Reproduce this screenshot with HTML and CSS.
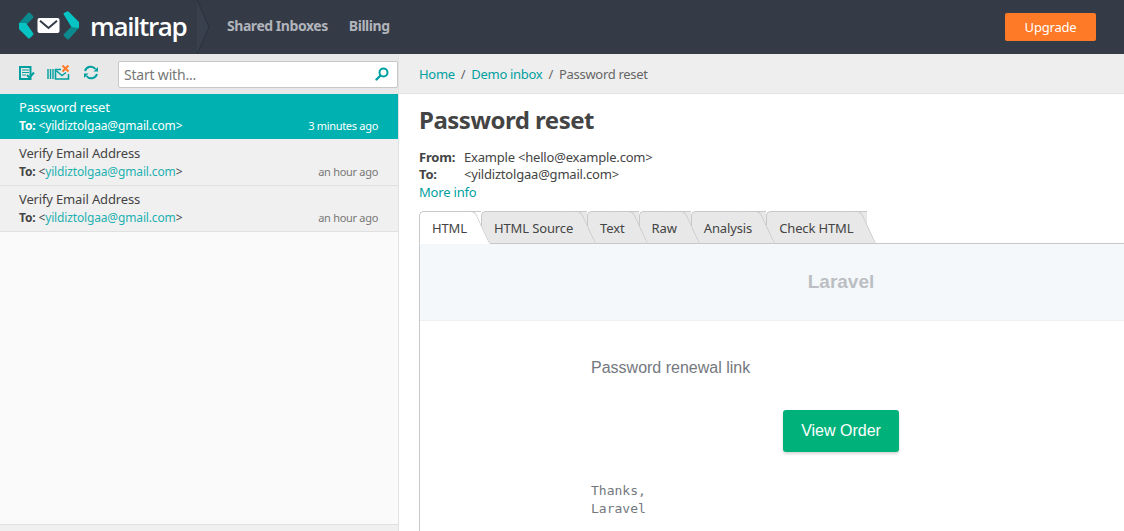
FILE: index.html
```html
<!DOCTYPE html>
<html lang="en">
<head>
  <meta charset="UTF-8" />
  <title>Mailtrap - Password reset</title>
  <link rel="stylesheet" href="styles.css">
</head>
<body>

  <header class="topbar">
    <a class="logo" href="#">
      <svg class="logo-mark" width="62" height="32" viewBox="0 0 62 32">
        <path d="M1 12 L10 2 Q11 1 12 2 L15 5 Q16 6 15 7 L9 13 Z" fill="#0a8a8e"/>
        <path d="M1 12 H8 L15 22 Q16 23 15 24 L12 27 Q11 28 10 27 L1 18 Z" fill="#06c4c4"/>
        <path d="M46 4 Q45 3 46 2 L49 0.500 Q50 0 51 1 L61 11 V17 H54 Z" fill="#06c4c4"/>
        <path d="M61 17 L51 28 Q50 29 49 28 L46 25 Q45 24 46 23 L53 16 Z" fill="#0a8a8e"/>
        <rect x="19.500" y="7" width="22" height="15" rx="2" fill="#fff"/>
        <path d="M22 9.700 L30.500 17 L39 9.700" stroke="#343b47" stroke-width="2" fill="none"/>
      </svg>
      <span class="logo-text">mailtrap</span>
    </a>
    <svg class="logo-edge" width="14" height="54" viewBox="0 0 14 54">
      <path d="M0 0 L12 27 L0 54 Z" fill="#3a414e"/>
      <path d="M0 0 L12 27 L0 54" fill="none" stroke="#2b313b" stroke-width="1"/>
    </svg>
    <nav class="topnav">
      <a href="#">Shared Inboxes</a>
      <a href="#">Billing</a>
    </nav>
    <button class="upgrade" type="button">Upgrade</button>
  </header>

  <div class="main">
    <aside class="sidebar">
      <div class="toolbar">
        <svg class="tool" width="16" height="16" viewBox="0 0 16 16">
          <rect x="1" y="2" width="10.500" height="12" fill="none" stroke="#00a0a0" stroke-width="2"/>
          <path d="M3 5 H10 M3 7.500 H10 M3 10 H7" stroke="#00a0a0" stroke-width="1.200"/>
          <path d="M8 10 L10.500 12.500 L15 7.500" stroke="#00a0a0" stroke-width="2" fill="none"/>
        </svg>
        <svg class="tool" width="23" height="16" viewBox="0 0 23 16">
          <path d="M1 4 V14 M3.500 4 V14 M6 4 V14" stroke="#00a0a0" stroke-width="1.400"/>
          <path d="M14 4.500 H8.500 V14 H21.500 V9" stroke="#00a0a0" stroke-width="1.600" fill="none"/>
          <path d="M9 5.500 L15 10.500 L19 7.500" stroke="#00a0a0" stroke-width="1.400" fill="none"/>
          <path d="M15.500 0.500 L21.500 6.500 M21.500 0.500 L15.500 6.500" stroke="#ff7a27" stroke-width="2"/>
        </svg>
        <svg class="tool" width="16" height="16" viewBox="0 0 16 16">
          <path d="M2 6 A6 6 0 0 1 12.500 4" stroke="#00a0a0" stroke-width="2" fill="none"/>
          <path d="M15 2 V6.500 H10.500 Z" fill="#00a0a0"/>
          <path d="M14 9 A6 6 0 0 1 3.500 11" stroke="#00a0a0" stroke-width="2" fill="none"/>
          <path d="M1 13 V8.500 H5.500 Z" fill="#00a0a0"/>
        </svg>
        <label class="search">
          <input type="text" placeholder="Start with...">
          <svg width="14" height="14" viewBox="0 0 14 14">
            <circle cx="8.500" cy="5.500" r="4" stroke="#00a0a0" stroke-width="2" fill="none"/>
            <path d="M5.500 8.500 L1.500 12.500" stroke="#00a0a0" stroke-width="2.400" stroke-linecap="round"/>
          </svg>
        </label>
      </div>

      <ul class="messages">
        <li class="message active">
          <div class="subject">Password reset</div>
          <div class="meta"><span><b>To:</b> &lt;<a href="#">yildiztolgaa@gmail.com</a>&gt;</span><time>3 minutes ago</time></div>
        </li>
        <li class="message">
          <div class="subject">Verify Email Address</div>
          <div class="meta"><span><b>To:</b> &lt;<a href="#">yildiztolgaa@gmail.com</a>&gt;</span><time>an hour ago</time></div>
        </li>
        <li class="message">
          <div class="subject">Verify Email Address</div>
          <div class="meta"><span><b>To:</b> &lt;<a href="#">yildiztolgaa@gmail.com</a>&gt;</span><time>an hour ago</time></div>
        </li>
      </ul>
      <div class="sidebar-foot"></div>
    </aside>

    <section class="detail">
      <div class="crumbs">
        <a href="#">Home</a><span class="sep">/</span><a href="#">Demo inbox</a><span class="sep">/</span><span>Password reset</span>
      </div>

      <div class="head">
        <h1>Password reset</h1>
        <dl class="fields">
          <dt>From:</dt><dd>Example &lt;hello@example.com&gt;</dd>
          <dt>To:</dt><dd>&lt;yildiztolgaa@gmail.com&gt;</dd>
        </dl>
        <a class="more" href="#">More info</a>
      </div>

      <ul class="tabs">
        <li class="tab active">HTML</li>
        <li class="tab">HTML Source</li>
        <li class="tab">Text</li>
        <li class="tab">Raw</li>
        <li class="tab">Analysis</li>
        <li class="tab">Check HTML</li>
      </ul>

      <div class="preview">
        <div class="mail">
          <div class="mail-head">Laravel</div>
          <div class="mail-body">
            <p class="mail-text">Password renewal link</p>
            <div class="mail-action"><a class="mail-button" href="#">View Order</a></div>
            <pre class="mail-sign">Thanks,
Laravel</pre>
          </div>
        </div>
      </div>
    </section>
  </div>

</body>
</html>
```

FILE: styles.css
```css
* {
  box-sizing: border-box;
}

html, body {
  height: 100%;
}

body {
  margin: 0;
  overflow: hidden;
  display: flex;
  flex-direction: column;
  font-family: "Noto Sans", sans-serif;
  font-size: 13px;
  letter-spacing: -0.2px;
  color: #444;
  background: #fff;
}

a {
  color: #00a0a0;
  text-decoration: none;
}

ul {
  margin: 0;
  padding: 0;
  list-style: none;
}

/* top bar */
.topbar {
  flex: none;
  height: 54px;
  display: flex;
  align-items: center;
  background: #343b47;
}

.logo {
  width: 197px;
  display: flex;
  align-items: center;
  padding-left: 18px;
  color: #fff;
}

.logo-mark {
  flex: none;
}

.logo-text {
  margin-left: 10px;
  margin-top: -3px;
  font-family: "Open Sans", sans-serif;
  font-size: 26px;
  font-weight: 600;
  letter-spacing: -1.35px;
  line-height: 1;
}

.logo-edge {
  flex: none;
}

.topnav {
  display: flex;
  gap: 21px;
  margin-left: 16px;
  margin-top: -4px;
}

.topnav a {
  color: #b1b4ba;
  font-size: 14px;
  font-weight: 700;
  letter-spacing: -0.45px;
}

.upgrade {
  margin-left: auto;
  margin-right: 28px;
  width: 91px;
  height: 28px;
  padding: 0;
  border: none;
  border-radius: 2px;
  background: #ff7a27;
  color: #fff;
  font-family: inherit;
  font-size: 13px;
  letter-spacing: -0.2px;
}

.main {
  flex: 1;
  min-height: 0;
  display: flex;
}

/* left column */
.sidebar {
  flex: none;
  width: 399px;
  display: flex;
  flex-direction: column;
  background: #fafafa;
  border-right: 1px solid #e2e2e2;
}

.toolbar {
  flex: none;
  height: 40px;
  display: flex;
  align-items: center;
  padding-left: 19px;
  background: #e8e8e8;
}

.tool {
  flex: none;
  margin-right: 12px;
  margin-bottom: 3px;
}

.tool + .tool {
  margin-right: 13px;
}

.tool + .tool + .tool {
  margin-right: 19px;
}

.search {
  flex: 1;
  height: 27px;
  display: flex;
  align-items: center;
  padding: 0 8px 0 5px;
  background: #fff;
  border: 1px solid #c8c8c8;
  border-radius: 2px;
}

.search input {
  flex: 1;
  min-width: 0;
  border: none;
  outline: none;
  padding: 0;
  font-family: inherit;
  font-size: 14px;
  letter-spacing: -0.2px;
}

.search input::placeholder {
  color: #777;
  opacity: 1;
}

.messages {
  flex: 1;
}

.message {
  height: 46px;
  padding: 4px 20px 0 19px;
  background: #f0f0f0;
  border-bottom: 1px solid #e0e0e0;
}

.message.active {
  background: #00b1b1;
  border-bottom-color: #f0f0f0;
  color: #fff;
}

.subject {
  line-height: 19px;
  letter-spacing: -0.15px;
}

.meta {
  display: flex;
  justify-content: space-between;
  align-items: center;
  line-height: 18px;
  font-size: 12px;
  letter-spacing: -0.15px;
}

.message a {
  color: #1cb0b0;
}

.message.active a {
  color: #fff;
}

.meta time {
  margin-top: -1px;
  font-size: 11px;
  letter-spacing: -0.3px;
  color: #777;
}

.message.active time {
  color: #fff;
}

.sidebar-foot {
  flex: none;
  height: 7px;
  background: #f0f0f0;
  border-top: 1px solid #e0e0e0;
}

/* right column */
.detail {
  flex: 1;
  min-width: 0;
  overflow: hidden;
}

.crumbs {
  height: 40px;
  display: flex;
  align-items: center;
  padding-left: 20px;
  background: #eee;
  border-bottom: 1px solid #e2e2e2;
  color: #666;
  letter-spacing: -0.3px;
}

.sep {
  margin: 0 6px;
}

.head {
  padding: 10px 0 0 20px;
}

h1 {
  margin: 0;
  font-size: 24px;
  line-height: 32px;
  font-weight: 700;
  letter-spacing: -0.5px;
  color: #444;
}

.fields {
  display: grid;
  grid-template-columns: 45px 1fr;
  margin: 13px 0 0;
  line-height: 17px;
}

.fields dt {
  font-weight: 700;
}

.fields dd {
  margin: 0;
}

.more {
  display: block;
  line-height: 18px;
}

.tabs {
  height: 33px;
  margin: 10px 0 0 20px;
  display: flex;
  border-bottom: 1px solid #c8c8c8;
}

.tab {
  position: relative;
  height: 33px;
  padding: 0 14px 0 12px;
  line-height: 32px;
  background: #e8e8e8;
  border: 1px solid #c8c8c8;
  border-right: none;
  border-radius: 5px 0 0 0;
  color: #444;
  letter-spacing: -0.13px;
}

/* slanted right edge of a tab, painted under its label */
.tab::after {
  content: "";
  position: absolute;
  z-index: -1;
  top: -1px;
  right: 6px;
  bottom: -1px;
  width: 20px;
  background: #e8e8e8;
  border-top: 1px solid #c8c8c8;
  border-right: 1px solid #c8c8c8;
  border-bottom: 1px solid #c8c8c8;
  border-radius: 0 5px 0 0;
  transform: skewX(25deg);
  transform-origin: top left;
}

.tab:nth-child(1) { z-index: 6; }
.tab:nth-child(2) { z-index: 5; }
.tab:nth-child(3) { z-index: 4; }
.tab:nth-child(4) { z-index: 3; }
.tab:nth-child(5) { z-index: 2; }
.tab:nth-child(6) { z-index: 1; }

.tab.active,
.tab.active::after {
  background: #fff;
  border-bottom-color: #fff;
}

/* the email itself */
.preview {
  margin-left: 20px;
  border-left: 1px solid #c8c8c8;
  height: 300px;
}

.mail {
  width: 842px;
  font-family: "Liberation Sans", sans-serif;
  letter-spacing: 0;
}

.mail-head {
  height: 77px;
  display: flex;
  align-items: center;
  justify-content: center;
  background: #f5f8fa;
  border-bottom: 1px solid #edeff2;
  font-size: 19px;
  font-weight: 700;
  color: #bbbfc3;
}

.mail-body {
  width: 570px;
  margin: 0 auto;
  padding: 35px;
}

.mail-text {
  margin: 0;
  font-size: 16px;
  line-height: 24px;
  color: #74787e;
}

.mail-action {
  display: flex;
  justify-content: center;
  margin-top: 30px;
}

.mail-button {
  width: 116px;
  height: 42px;
  display: flex;
  align-items: center;
  justify-content: center;
  background: #00b27a;
  border-radius: 3px;
  box-shadow: 0 2px 3px rgba(0, 0, 0, 0.16);
  color: #fff;
  font-size: 16px;
}

.mail-sign {
  margin: 30px 0 0;
  font-family: "DejaVu Sans Mono", monospace;
  font-size: 13px;
  line-height: 18px;
  color: #74787e;
}
```
